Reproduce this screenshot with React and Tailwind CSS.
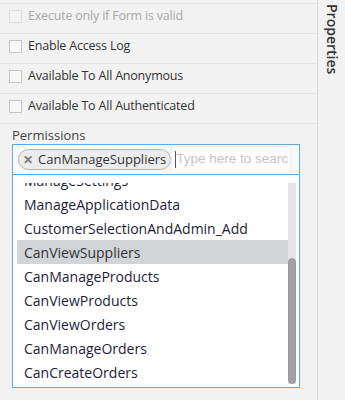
import React from "react";

const options = [
  "ManageSettings",
  "ManageApplicationData",
  "CustomerSelectionAndAdmin_Add",
  "CanViewSuppliers",
  "CanManageProducts",
  "CanViewProducts",
  "CanViewOrders",
  "CanManageOrders",
  "CanCreateOrders",
];

function CheckRow({ label, disabled }) {
  return (
    <div className="h-[30px] border-t border-[#e4e4e4] pt-[5px] pl-[9px]">
      <div className="flex items-center gap-[6px]">
        <span
          className={
            disabled
              ? "w-[13px] h-[13px] border border-[#e0e0e0] bg-[#f4f4f4]"
              : "w-[13px] h-[13px] border border-[#c4c4c4] bg-[#f8f8f8]"
          }
        />
        <span
          className={
            disabled
              ? "text-[12.5px] tracking-[-0.2px] leading-[14px] text-[#a8a8a8]"
              : "text-[12.5px] tracking-[-0.2px] leading-[14px] text-[#333]"
          }
        >
          {label}
        </span>
      </div>
    </div>
  );
}

export default function App() {
  return (
    <div
      className="w-[345px] h-[400px] overflow-hidden flex bg-[#f2f2f2]"
      style={{ fontFamily: '"Open Sans", sans-serif' }}
    >
      {/* Main settings column */}
      <div className="w-[317px] flex flex-col">
        <div className="h-[3px]" />
        <CheckRow label="Execute only if Form is valid" disabled />
        <CheckRow label="Enable Access Log" />
        <CheckRow label="Available To All Anonymous" />
        <CheckRow label="Available To All Authenticated" />
        <div className="border-t border-[#e4e4e4] pl-[12px] pt-[3px]">
          <div className="text-[13px] leading-[17px] text-[#444]">Permissions</div>
        </div>

        {/* Multi-select */}
        <div className="ml-[12px] w-[288px]">
          <div className="h-[31px] border border-[#5fa8e2] bg-[#fafafa] flex items-center pl-[5px] pr-[9px] gap-[1px]">
            <span className="h-[21px] flex items-center gap-[5px] pl-[4px] pr-[4px] rounded-full border border-[#b4b4b4] bg-[#ececec]">
              <span className="text-[12px] leading-none font-bold text-[#777]">✕</span>
              <span className="text-[13px] leading-none text-[#333]">CanManageSuppliers</span>
            </span>
            <div className="flex-1 h-[26px] bg-white shadow-[0_0_3px_#cfe4f7] flex items-center pl-[3px] overflow-hidden">
              <span className="w-px h-[17px] bg-[#555] shrink-0" />
              <span
                className="text-[13.5px] text-[#c4c4c4] whitespace-nowrap"
                style={{ fontFamily: '"Liberation Sans", Arial, sans-serif' }}
              >
                Type here to searc
              </span>
            </div>
          </div>
          <div className="border-x border-b border-[#5fa8e2] bg-white pt-[8px] pb-[3px] pl-[4px] pr-[3px]">
            <div className="h-[201px] flex overflow-hidden">
              <div className="flex-1 -mt-[15px]">
                {options.map((o) => (
                  <div
                    key={o}
                    className={
                      o === "CanViewSuppliers"
                        ? "h-[24px] flex items-center pl-[7px] text-[14px] text-[#333] bg-[#d2d4d8]"
                        : "h-[24px] flex items-center pl-[7px] text-[14px] text-[#1d1d3a]"
                    }
                  >
                    {o}
                  </div>
                ))}
              </div>
              <div className="w-[8px] bg-[#e4e4e4] flex flex-col">
                <div className="h-[75px]" />
                <div className="flex-1 rounded-full bg-[#a2a2a2] border border-[#999]" />
              </div>
            </div>
          </div>
        </div>
      </div>

      {/* Right collapsed panel */}
      <div className="flex-1 border-l border-[#d6d6d6] flex justify-center pt-[4px]">
        <span
          className="text-[14px] font-semibold text-[#333] leading-none"
          style={{ writingMode: "vertical-rl" }}
        >
          Properties
        </span>
      </div>
    </div>
  );
}
